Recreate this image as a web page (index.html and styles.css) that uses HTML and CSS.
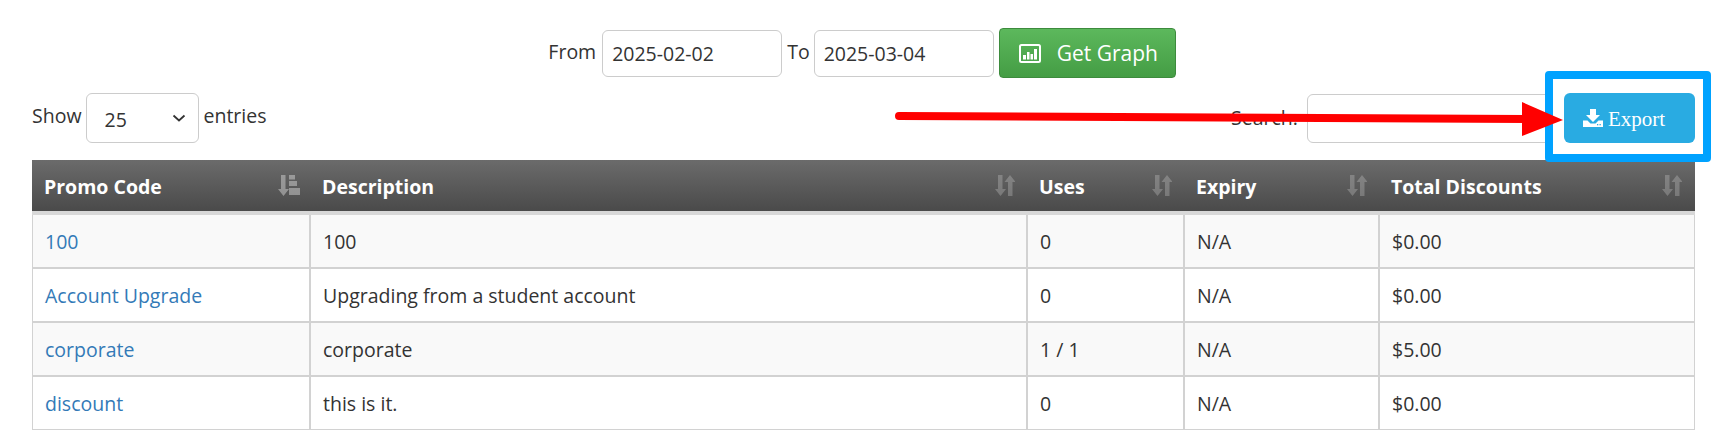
FILE: index.html
```html
<!DOCTYPE html>
<html lang="en">
<head>
<meta charset="utf-8">
<title>Promo Codes</title>
<link rel="stylesheet" href="styles.css">
</head>
<body>
<div class="page">
  <form class="date-row">
    <label class="date-label">From</label>
    <input class="date-input" type="text" value="2025-02-02">
    <label class="date-label date-label-to">To</label>
    <input class="date-input date-input-to" type="text" value="2025-03-04">
    <button class="graph-btn" type="button">
      <svg class="graph-icon" viewBox="0 0 22 19" aria-hidden="true"><rect x="1" y="1" width="20" height="17" rx="1.5" fill="none" stroke="#fff" stroke-width="2"/><rect x="4" y="11" width="3" height="4.5" fill="#fff"/><rect x="8" y="8" width="2.5" height="7.5" fill="#fff"/><rect x="11.5" y="10" width="2.5" height="5.5" fill="#fff"/><rect x="15" y="5" width="3" height="10.5" fill="#fff"/></svg>
      <span>Get Graph</span>
    </button>
  </form>

  <div class="toolbar">
    <div class="length">
      <span>Show</span>
      <select class="length-select"><option>25</option></select>
      <span>entries</span>
    </div>
    <div class="tools">
      <label class="search-label">Search:</label>
      <input class="search-input" type="text">
      <div class="export-frame"></div>
      <button class="export-btn" type="button">
        <svg class="export-icon" viewBox="0 0 20 18" aria-hidden="true"><path d="M7 0h6v6h4l-7 7-7-7h4z" fill="#fff"/><path d="M0 11.5h4.5l3 3h5l3-3H20V18H0z" fill="#fff"/><rect x="14" y="15" width="1.3" height="1.3" fill="#29abe2"/><rect x="16.5" y="15" width="1.3" height="1.3" fill="#29abe2"/></svg>
        <span class="export-text">Export</span>
      </button>
    </div>
  </div>

  <table class="promo-table">
    <colgroup>
      <col class="col-code"><col class="col-desc"><col class="col-uses"><col class="col-expiry"><col class="col-total">
    </colgroup>
    <thead>
      <tr>
        <th><div class="th-inner"><span>Promo Code</span><svg class="sort-icon" viewBox="0 0 22 21" aria-hidden="true"><path d="M3 0h4.500v14H11l-5.500 7L0 14h3z"/><path d="M11 0h6v4.500h-6zM11 6h8v5h-8zM11 13h11v7H11z"/></svg></div></th>
        <th><div class="th-inner"><span>Description</span><svg class="sort-icon" viewBox="0 0 20 21" aria-hidden="true"><use href="#sort-both"/></svg></div></th>
        <th><div class="th-inner"><span>Uses</span><svg class="sort-icon" viewBox="0 0 20 21" aria-hidden="true"><use href="#sort-both"/></svg></div></th>
        <th><div class="th-inner"><span>Expiry</span><svg class="sort-icon" viewBox="0 0 20 21" aria-hidden="true"><use href="#sort-both"/></svg></div></th>
        <th><div class="th-inner"><span>Total Discounts</span><svg class="sort-icon" viewBox="0 0 20 21" aria-hidden="true"><use href="#sort-both"/></svg></div></th>
      </tr>
    </thead>
    <tbody>
      <tr class="odd"><td><a href="#">100</a></td><td>100</td><td>0</td><td>N/A</td><td>$0.00</td></tr>
      <tr><td><a href="#">Account Upgrade</a></td><td>Upgrading from a student account</td><td>0</td><td>N/A</td><td>$0.00</td></tr>
      <tr class="odd"><td><a href="#">corporate</a></td><td>corporate</td><td>1 / 1</td><td>N/A</td><td>$5.00</td></tr>
      <tr><td><a href="#">discount</a></td><td>this is it.</td><td>0</td><td>N/A</td><td>$0.00</td></tr>
    </tbody>
  </table>

  <svg class="annotation" width="1731" height="430" viewBox="0 0 1731 430" aria-hidden="true">
    <defs><symbol id="sort-both" viewBox="0 0 20 21"><path d="M3 0h4.500v14H11l-5.500 7L0 14h3z"/><path d="M15 0l5.500 7H17.500v14H13V7H9.500z"/></symbol></defs>
    <line x1="899" y1="116" x2="1526" y2="119" stroke="#ff0000" stroke-width="8" stroke-linecap="round"/>
    <polygon points="1522,102 1563,120 1522,136" fill="#ff0000"/>
  </svg>
</div>
</body>
</html>
```

FILE: styles.css
```css
* { box-sizing: border-box; }
html, body { margin: 0; padding: 0; background: #fff; }
body {
  font-family: "Open Sans", sans-serif;
  font-size: 19.5px;
  color: #333;
  overflow: hidden;
}
.page {
  position: relative;
  width: 1731px;
  height: 430px;
  padding: 28px 36px 0 32px;
  overflow: hidden;
}
.date-row {
  display: flex;
  justify-content: center;
  align-items: center;
  height: 50px;
  margin: 0;
  padding-right: 3px;
}
.date-label { padding-bottom: 3px; margin-right: 6px; }
.date-label-to { margin-right: 4px; }
.date-input {
  width: 180px;
  height: 47px;
  margin-right: 5px;
  padding: 0 9px;
  border: 1px solid #ccc;
  border-radius: 6px;
  font: 19.5px "Open Sans", sans-serif;
  color: #333;
  background: #fff;
}
.date-input-to { margin-right: 4px; }
.graph-btn {
  display: flex;
  align-items: center;
  gap: 16px;
  width: 177px;
  height: 50px;
  margin-left: 1px;
  padding: 0 0 0 19px;
  border: 1px solid #3d8b3d;
  border-radius: 4px;
  background: linear-gradient(#5cb85c, #449d44);
  color: #fff;
  font: 21px "Open Sans", sans-serif;
}
.graph-icon { width: 22px; height: 19px; flex: none; }
.toolbar {
  display: flex;
  justify-content: space-between;
  height: 50px;
  margin-top: 15px;
}
.length { display: flex; align-items: center; gap: 4px; height: 50px; padding-bottom: 5px; }
.length-select {
  appearance: none;
  width: 113px;
  height: 50px;
  margin: 5px 1px 0 0;
  padding: 2px 0 0 18px;
  border: 1px solid #ccc;
  border-radius: 6px;
  background: #fff url("data:image/svg+xml,%3Csvg xmlns='http://www.w3.org/2000/svg' width='14' height='8' viewBox='0 0 14 8'%3E%3Cpath d='M1.500 1.500 7 6.500l5.500-5' fill='none' stroke='%23333' stroke-width='1.800'/%3E%3C/svg%3E") no-repeat right 12px center;
  font: 19.5px "Open Sans", sans-serif;
  color: #333;
}
.tools { position: relative; display: flex; align-items: center; }
.search-label { position: absolute; left: -76px; top: 11px; }
.search-input {
  width: 246px;
  height: 49px;
  margin-right: 142px;
  border: 1px solid #ccc;
  border-radius: 6px;
  background: #fff;
}
.export-frame {
  position: absolute;
  right: -16px;
  top: -22px;
  width: 166px;
  height: 91px;
  border: 8px solid #00a2ff;
  border-radius: 4px;
  background: #fff;
}
.export-btn {
  position: absolute;
  right: 0;
  top: 0;
  display: flex;
  align-items: center;
  gap: 5px;
  width: 131px;
  height: 50px;
  padding: 0 0 0 19px;
  border: 0;
  border-radius: 6px;
  background: #29abe2;
  color: #fff;
  font: 21px "Liberation Serif", serif;
}
.export-icon { width: 20px; height: 18px; flex: none; }
.export-text { padding-top: 2px; }
.promo-table {
  width: 1663px;
  margin-top: 17px;
  table-layout: fixed;
  border-collapse: separate;
  border-spacing: 0;
}
.col-code { width: 279px; }
.col-desc { width: 717px; }
.col-uses { width: 157px; }
.col-expiry { width: 195px; }
.col-total { width: 315px; }
th {
  height: 55px;
  padding: 1px 13px 0 11px;
  background: linear-gradient(#6b6b6b, #4a4a4a);
  background-clip: padding-box;
  color: #fff;
  text-align: left;
  font-weight: 700;
  font-size: 19.5px;
  border-bottom: 4px solid #d8d8d8;
}
th:first-child { padding: 1px 11px 0 12px; }
.th-inner { display: flex; justify-content: space-between; align-items: center; }
.sort-icon { width: 20px; height: 21px; margin-top: -1px; fill: rgba(255, 255, 255, 0.22); flex: none; }
th:first-child .sort-icon { width: 22px; fill: rgba(255, 255, 255, 0.36); }
td {
  height: 54px;
  padding: 0 11px 0 12px;
  border-right: 2px solid #d2d2d2;
  border-bottom: 2px solid #d2d2d2;
  color: #333;
}
td:first-child { border-left: 1px solid #d2d2d2; }
td:last-child { border-right: 1px solid #d2d2d2; }
.odd td { background: #f9f9f9; }
td a { color: #337ab7; text-decoration: none; }
.annotation { position: absolute; left: 0; top: 0; pointer-events: none; z-index: 5; }
```
